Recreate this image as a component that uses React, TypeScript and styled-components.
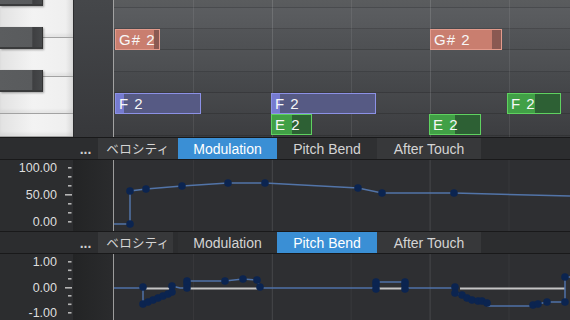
import React from "react";
import styled, { createGlobalStyle } from "styled-components";

const GlobalStyle = createGlobalStyle`
  html, body { margin: 0; padding: 0; background: #2b2c2e; }
  body { font-family: "Liberation Sans", Arial, "Noto Sans CJK JP", sans-serif; }
`;

type Tone = "salmon" | "violet" | "green";
const TONES: Record<Tone, { border: string; bright: string; dim: string }> = {
  salmon: { border: "#e39b8c", bright: "#c97e6f", dim: "#8a5952" },
  violet: { border: "#8c91e6", bright: "#767bd0", dim: "#565a84" },
  green: { border: "#5fd160", bright: "#41a046", dim: "#2d6034" },
};

const ROW_H = 21.33;
const ROW0 = -13.67;
const BEAT = 78.9;
const PITCH_ROWS = [
  { name: "A#2", black: true },
  { name: "A2", black: false },
  { name: "G#2", black: true },
  { name: "G2", black: false },
  { name: "F#2", black: true },
  { name: "F2", black: false },
  { name: "E2", black: false },
  { name: "D#2", black: true },
];

const NOTES: { pitch: string; label: string; x: number; w: number; vel: number; tone: Tone }[] = [
  { pitch: "G#2", label: "G# 2", x: 1, w: 45, vel: 38, tone: "salmon" },
  { pitch: "G#2", label: "G# 2", x: 316, w: 72, vel: 61, tone: "salmon" },
  { pitch: "F2", label: "F 2", x: 1, w: 86, vel: 8, tone: "violet" },
  { pitch: "F2", label: "F 2", x: 157, w: 105, vel: 8, tone: "violet" },
  { pitch: "E2", label: "E 2", x: 157, w: 41, vel: 20, tone: "green" },
  { pitch: "E2", label: "E 2", x: 315, w: 52, vel: 25, tone: "green" },
  { pitch: "F2", label: "F 2", x: 393, w: 54, vel: 27, tone: "green" },
];

const BEATS = [1, 2, 3, 4, 5];

const Root = styled.div`
  width: 570px;
  height: 320px;
  overflow: hidden;
  display: flex;
  flex-direction: column;
  background: #2b2c2e;
`;

const Lane = styled.div<{ $h: number }>`
  display: grid;
  grid-template-columns: 73px 40px 1px 1fr;
  height: ${(p) => p.$h}px;
  flex: none;
`;

/* ---------- keyboard ---------- */
const Keyboard = styled.div`
  position: relative;
  display: flex;
  flex-direction: column;
  overflow: hidden;
  background: #ededed;
  box-shadow: inset -1px 0 0 #8a8a8a;
`;

const WhiteKey = styled.div<{ $h?: number }>`
  flex: ${(p) => (p.$h ? `0 0 ${p.$h}px` : "1 1 auto")};
  box-sizing: border-box;
  background: linear-gradient(to right, #e2e2e2 0%, #f3f3f3 45%, #efefef 90%, #d9d9d9 100%);
  border-bottom: 1px solid #a2a2a2;
  box-shadow: inset 0 -3px 3px rgba(0, 0, 0, 0.05);
`;

const BlackKey = styled.div<{ $top: number }>`
  position: absolute;
  left: 0;
  top: ${(p) => p.$top}px;
  width: 43px;
  height: 22px;
  box-sizing: border-box;
  background: linear-gradient(
    to right,
    #5b5d5f 0%,
    #595b5d 76%,
    #3e3f41 78%,
    #47494b 100%
  );
  border-bottom: 2px solid #3a3b3c;
  border-right: 1px solid #333;
  box-shadow: 1px 1px 2px rgba(0, 0, 0, 0.35);
`;

const KeysGutter = styled.div`
  background: linear-gradient(to bottom, #45474a, #37383b);
  box-shadow: inset 1px 0 0 #2c2d2f;
`;

const Divider = styled.div<{ $c?: string }>`
  background: ${(p) => p.$c ?? "#a2a2a2"};
`;

/* ---------- note grid ---------- */
const NoteGrid = styled.div`
  position: relative;
  overflow: hidden;
  background: linear-gradient(to bottom, #5d5f62 0%, #4b4d50 55%, #3c3d40 100%);
`;

const RowStack = styled.div`
  display: flex;
  flex-direction: column;
  margin-top: ${ROW0}px;
`;

const PitchRow = styled.div<{ $black: boolean }>`
  flex: 0 0 ${ROW_H}px;
  box-sizing: border-box;
  border-bottom: 1px solid rgba(0, 0, 0, 0.16);
  background: ${(p) => (p.$black ? "rgba(0,0,0,0.03)" : "transparent")};
`;

const BeatLine = styled.div<{ $bar: boolean }>`
  position: absolute;
  top: 0;
  bottom: 0;
  width: 1px;
  background: ${(p) => (p.$bar ? "rgba(255,255,255,0.13)" : "rgba(255,255,255,0.08)")};
`;

const Note = styled.div<{ $tone: Tone }>`
  position: absolute;
  height: 21px;
  box-sizing: border-box;
  border: 1px solid ${(p) => TONES[p.$tone].border};
  background: ${(p) => TONES[p.$tone].dim};
  display: flex;
  align-items: center;
  overflow: hidden;
`;

const NoteFill = styled.div<{ $tone: Tone }>`
  position: absolute;
  left: 0;
  top: 0;
  bottom: 0;
  background: ${(p) => TONES[p.$tone].bright};
`;

const NoteLabel = styled.span`
  position: relative;
  padding-left: 3px;
  font-size: 15px;
  letter-spacing: 1px;
  line-height: 1;
  color: #f7f7f7;
  white-space: pre;
`;

/* ---------- tabs ---------- */
const TabBar = styled.div`
  display: flex;
  height: 21px;
  flex: none;
  border-top: 1px solid #19191a;
  border-bottom: 1px solid #19191a;
  background: #2c2d2f;
`;

const TabLead = styled.div`
  width: 73px;
`;

const More = styled.div`
  width: 25px;
  display: flex;
  align-items: center;
  justify-content: center;
  font-size: 14px;
  font-weight: bold;
  color: #cfcfcf;
  padding-top: 1px;
`;

const Tab = styled.div<{ $w: number; $active?: boolean; $shade?: number }>`
  width: ${(p) => p.$w}px;
  display: flex;
  align-items: center;
  justify-content: center;
  font-size: 14px;
  color: ${(p) => (p.$active ? "#ffffff" : "#d4d4d4")};
  background: ${(p) =>
    p.$active
      ? "#3a8fd5"
      : p.$shade
      ? `linear-gradient(to right, #37383a 0 ${p.$shade}px, transparent ${p.$shade}px)`
      : "#2f3032"};
`;

const KanaText = styled.span`
  font-family: "Noto Sans CJK JP", sans-serif;
  font-size: 12.5px;
  letter-spacing: 0.3px;
`;

/* ---------- charts ---------- */
const Axis = styled.div`
  display: grid;
  grid-template-columns: 60px 13px;
  background: #2c2d2f;
`;

const AxisLabels = styled.div<{ $top: number; $gap: number }>`
  display: flex;
  flex-direction: column;
  align-items: flex-end;
  gap: ${(p) => p.$gap}px;
  padding-top: ${(p) => p.$top}px;
  padding-right: 3px;
`;

const AxisLabel = styled.div`
  font-size: 12.5px;
  line-height: 12px;
  height: 12px;
  color: #dedede;
`;

const ChartGutter = styled.div`
  background: linear-gradient(to right, #232425, #2a2b2d);
`;

const Plot = styled.svg`
  display: block;
  background: #2e2f32;
`;

type Pt = [number, number];

const Ticks = ({ ys, major }: { ys: number[]; major: number }) => (
  <svg width="13" height="72" style={{ display: "block" }}>
    {ys.map((y, i) => (
      <rect
        key={i}
        x={i === major ? 5 : 8}
        y={y - 1}
        width={i === major ? 7 : 3.5}
        height={1.6}
        fill="#b5b5b5"
      />
    ))}
  </svg>
);

const GridLines = ({ h }: { h: number }) => (
  <>
    {BEATS.map((b) => (
      <line
        key={b}
        x1={b * BEAT + 0.5}
        x2={b * BEAT + 0.5}
        y1={0}
        y2={h}
        stroke={b % 2 === 0 ? "rgba(255,255,255,0.12)" : "rgba(255,255,255,0.05)"}
        strokeWidth={1}
      />
    ))}
  </>
);

const Dots = ({ pts }: { pts: Pt[] }) => (
  <>
    {pts.map(([x, y], i) => (
      <circle key={i} cx={x} cy={y} r={3.8} fill="#0b2450" />
    ))}
  </>
);

const toPath = (pts: Pt[]) => pts.map(([x, y], i) => `${i ? "L" : "M"}${x} ${y}`).join(" ");

const MOD_LINE: Pt[] = [
  [0, 64], [16, 64], [16, 31], [32, 29], [68, 26], [114, 23], [151, 23],
  [244, 28], [268, 33], [340, 33], [456, 36],
];
const MOD_DOTS: Pt[] = MOD_LINE.slice(1, -1);

const PB_LINE: Pt[] = [
  [0, 34], [29, 34], [29, 50], [34, 48], [39, 46], [44, 44], [49, 42], [54, 40], [58, 38],
  [58, 32], [66, 34], [73, 34], [73, 27], [111, 27], [129, 25], [143, 26], [146, 33], [146, 34],
  [262, 34], [262, 28], [291, 28], [291, 34], [341, 34], [341, 39], [348, 41], [353, 44],
  [358, 46], [364, 47], [368, 47], [373, 49], [374, 52], [419, 52], [424, 50], [433, 48],
  [451, 48], [451, 23], [456, 23],
];
const PB_DOTS: Pt[] = [
  [29, 33], [29, 50], [34, 48], [39, 46], [44, 44], [49, 42], [54, 40], [58, 38], [58, 32],
  [73, 27], [73, 30], [73, 34], [111, 27], [129, 25], [143, 26], [146, 33],
  [262, 28], [262, 31], [262, 35], [291, 28], [291, 31], [291, 35],
  [341, 33], [341, 39], [348, 41], [353, 44], [358, 46], [364, 47], [368, 47], [373, 49],
  [419, 51], [424, 50], [433, 48], [451, 48], [451, 23],
];
const PB_HOLDS: [number, number][] = [
  [29, 58],
  [74, 146],
  [262, 291],
  [346, 451],
];

const TABS = ["Modulation", "Pitch Bend", "After Touch"];

const TabRow = ({ active, veloShade }: { active: string; veloShade: number }) => (
  <TabBar>
    <TabLead />
    <More>...</More>
    <Tab $w={80} $shade={veloShade}>
      <KanaText>ベロシティ</KanaText>
    </Tab>
    {TABS.map((t) => (
      <Tab
        key={t}
        $w={t === "Modulation" ? 99 : t === "Pitch Bend" ? 100 : 104}
        $active={t === active}
        $shade={t === "After Touch" ? 104 : undefined}
      >
        {t}
      </Tab>
    ))}
  </TabBar>
);

export default function App() {
  return (
    <>
      <GlobalStyle />
      <Root>
        <Lane $h={137}>
          <Keyboard>
            <WhiteKey $h={38} />
            <WhiteKey $h={39} />
            <WhiteKey $h={37} />
            <WhiteKey />
            <BlackKey $top={-16} />
            <BlackKey $top={27} />
            <BlackKey $top={70} />
          </Keyboard>
          <KeysGutter />
          <Divider />
          <NoteGrid>
            <RowStack>
              {PITCH_ROWS.map((r) => (
                <PitchRow key={r.name} $black={r.black} />
              ))}
            </RowStack>
            {BEATS.map((b) => (
              <BeatLine key={b} $bar={b % 2 === 0} style={{ left: Math.round(b * BEAT) }} />
            ))}
            {NOTES.map((n, i) => {
              const idx = PITCH_ROWS.findIndex((r) => r.name === n.pitch);
              return (
                <Note
                  key={i}
                  $tone={n.tone}
                  style={{ left: n.x, width: n.w, top: Math.round(ROW0 + idx * ROW_H) }}
                >
                  <NoteFill $tone={n.tone} style={{ width: n.vel }} />
                  <NoteLabel>{n.label}</NoteLabel>
                </Note>
              );
            })}
          </NoteGrid>
        </Lane>

        <TabRow active="Modulation" veloShade={80} />

        <Lane $h={71}>
          <Axis>
            <AxisLabels $top={2} $gap={15}>
              <AxisLabel>100.00</AxisLabel>
              <AxisLabel>50.00</AxisLabel>
              <AxisLabel>0.00</AxisLabel>
            </AxisLabels>
            <Ticks ys={[8, 17, 26, 35, 44, 53, 62]} major={3} />
          </Axis>
          <ChartGutter />
          <Divider $c="#9c9c9c" />
          <Plot width={456} height={71} viewBox="0 0 456 71">
            <GridLines h={71} />
            <path d={toPath(MOD_LINE)} fill="none" stroke="#5274a8" strokeWidth={1.5} />
            <Dots pts={MOD_DOTS} />
          </Plot>
        </Lane>

        <TabRow active="Pitch Bend" veloShade={75} />

        <Lane $h={66}>
          <Axis>
            <AxisLabels $top={2} $gap={13.5}>
              <AxisLabel>1.00</AxisLabel>
              <AxisLabel>0.00</AxisLabel>
              <AxisLabel>-1.00</AxisLabel>
            </AxisLabels>
            <Ticks ys={[8, 16.5, 25, 34, 42, 50.5, 59]} major={3} />
          </Axis>
          <ChartGutter />
          <Divider $c="#9c9c9c" />
          <Plot width={456} height={66} viewBox="0 0 456 66">
            <GridLines h={66} />
            {PB_HOLDS.map(([a, b], i) => (
              <line key={i} x1={a} x2={b} y1={34.5} y2={34.5} stroke="#c4c4c4" strokeWidth={2} />
            ))}
            <path d={toPath(PB_LINE)} fill="none" stroke="#4f72a8" strokeWidth={1.5} />
            <Dots pts={PB_DOTS} />
          </Plot>
        </Lane>
      </Root>
    </>
  );
}
